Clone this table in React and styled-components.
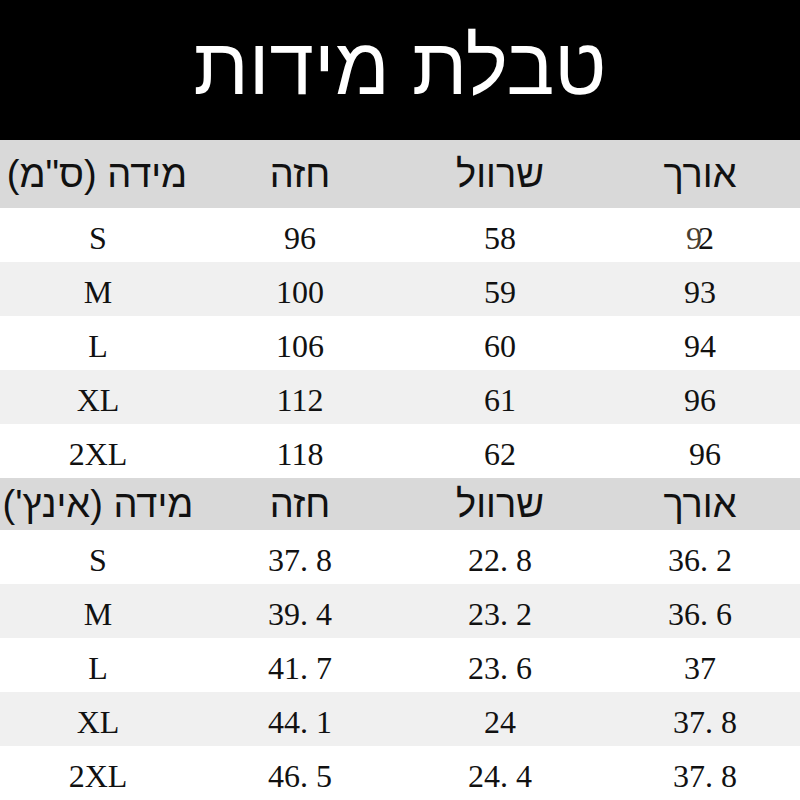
import React from 'react';
import styled, { createGlobalStyle } from 'styled-components';

const GlobalStyle = createGlobalStyle`
  html, body {
    margin: 0;
    padding: 0;
    background: #fff;
  }
`;

// Layout
const Page = styled.div`
  width: 800px;
  height: 800px;
  display: flex;
  flex-direction: column;
  overflow: hidden;
`;

// title bar
const TitleBar = styled.header`
  height: 140px;
  background-color: #000;
  color: #fff;
  display: flex;
  align-items: center;
  justify-content: center;
  font-family: 'Liberation Sans', 'DejaVu Sans', sans-serif;
  font-size: 80px;
  font-weight: 400;
  direction: rtl;
  padding-bottom: 6px;
  box-sizing: border-box;
`;

// rows
const Row = styled.div`
  display: grid;
  grid-template-columns: repeat(4, 200px);
  height: ${({ $h }) => $h}px;
  background-color: ${({ $bg }) => $bg};
  align-items: center;
`;

const HeadCell = styled.div`
  text-align: center;
  font-family: 'Liberation Sans', 'DejaVu Sans', sans-serif;
  font-size: 38px;
  color: #111;
  direction: rtl;
  white-space: nowrap;
  margin-left: ${({ $shift }) => $shift || 0}px;
`;

const Cell = styled.div`
  text-align: center;
  font-family: 'Liberation Serif', serif;
  font-size: 32px;
  color: #111;
  padding-top: 6px;
  margin-left: ${({ $shift }) => $shift || 0}px;
`;

const Ghost = styled.span`
  color: #4a4030;
  letter-spacing: -4px;
`;

const HEAD_CM = ['מידה (ס"מ)', 'חזה', 'שרוול', 'אורך'];
const HEAD_IN = ["מידה (אינץ')", 'חזה', 'שרוול', 'אורך'];

const CM = [
  ['S', '96', '58', 'GHOST'],
  ['M', '100', '59', '93'],
  ['L', '106', '60', '94'],
  ['XL', '112', '61', '96'],
  ['2XL', '118', '62', '96'],
];

const INCH = [
  ['S', '37. 8', '22. 8', '36. 2'],
  ['M', '39. 4', '23. 2', '36. 6'],
  ['L', '41. 7', '23. 6', '37'],
  ['XL', '44. 1', '24', '37. 8'],
  ['2XL', '46. 5', '24. 4', '37. 8'],
];

const bgFor = (i) => (i % 2 === 0 ? '#ffffff' : '#f0f0f0');

function Body({ rows, shifts }) {
  return rows.map((r, i) => (
    <Row key={i} $h={54} $bg={bgFor(i)}>
      {r.map((v, j) => (
        <Cell key={j} $shift={j === 3 ? shifts[i] : j === 0 ? -4 : 0}>
          {v === 'GHOST' ? (<><Ghost>9</Ghost>2</>) : v}
        </Cell>
      ))}
    </Row>
  ));
}

function App() {
  return (
    <Page>
      <GlobalStyle />
      <TitleBar>טבלת מידות</TitleBar>
      <Row $h={68} $bg="#d9d9d9">
        {HEAD_CM.map((h, i) => <HeadCell key={i} $shift={i === 0 ? -6 : 0}>{h}</HeadCell>)}
      </Row>
      <Body rows={CM} shifts={[0, 0, 0, 0, 10]} />
      <Row $h={52} $bg="#d9d9d9">
        {HEAD_IN.map((h, i) => <HeadCell key={i} $shift={i === 0 ? -4 : 0}>{h}</HeadCell>)}
      </Row>
      <Body rows={INCH} shifts={[0, 0, 0, 10, 10]} />
    </Page>
  );
}

export default App;
